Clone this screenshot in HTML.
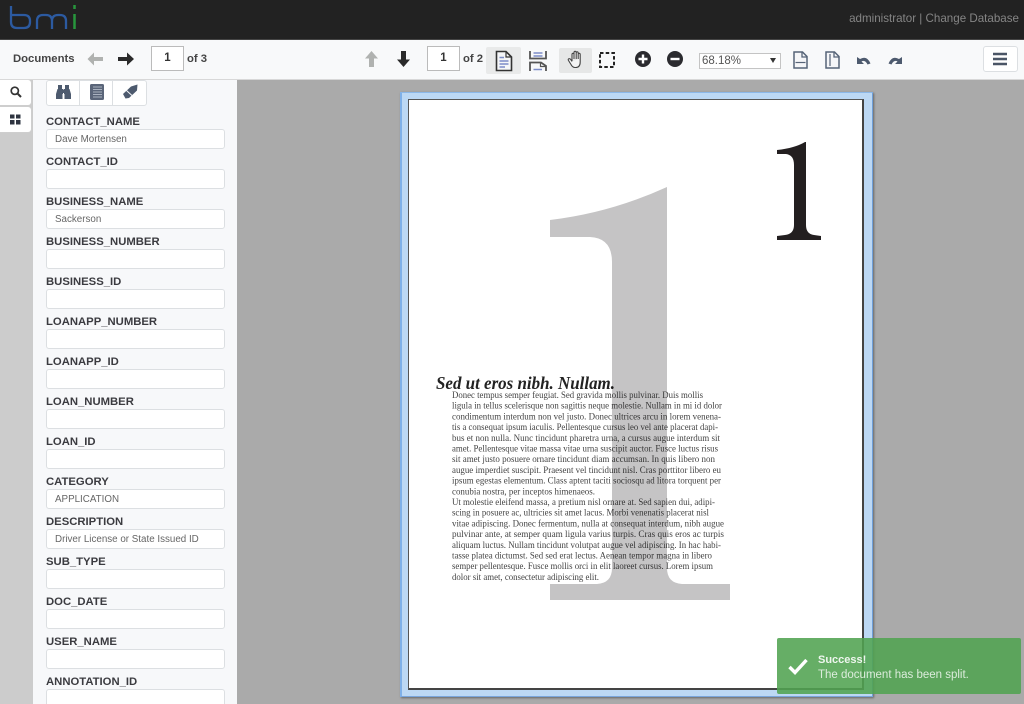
<!DOCTYPE html>
<html><head><meta charset="utf-8"><title>bmi</title>
<style>
html,body{margin:0;padding:0;background:#aaa;width:1024px;height:704px;overflow:hidden}
#wrap{position:relative;width:1024px;height:704px;overflow:hidden;font-family:"Liberation Sans",sans-serif;color:#333;filter:blur(.3px)}
.a{position:absolute}
#hd{left:0;top:0;width:1024px;height:39px;background:#222;border-bottom:1px solid #444}
#tb{left:0;top:40px;width:1024px;height:39px;background:#f8f9fa;border-bottom:1px solid #d8d8d8}
#strip{left:0;top:80px;width:33px;height:624px;background:#ccc}
#side{left:33px;top:80px;width:204px;height:624px;background:#f7f8fa}
.tab{left:0;width:31px;height:25px;background:#fff;border-radius:0 3px 3px 0;box-shadow:0 0 1px #ddd}
.lb{left:46px;margin-top:1px;font-size:11.3px;font-weight:bold;color:#3b3b40;line-height:14px;white-space:nowrap}
.in{left:46px;width:177px;height:18px;background:#fff;border:1px solid #dcdfe2;border-radius:3px;font-size:9.8px;color:#666;line-height:20px;text-indent:8px}
.num{width:31px;height:23px;background:#fff;border:1px solid #bbb;text-align:center;font-size:11.5px;font-weight:bold;line-height:23px;color:#333}
.t{font-size:11.3px;font-weight:bold;color:#444;white-space:nowrap}
svg{display:block}
</style></head><body><div id="wrap">
<div class="a" id="hd"></div>
<svg class="a" style="left:0;top:0" width="84" height="34" viewBox="0 0 84 34" fill="none" stroke-width="2.300"><path d="M11 6V22q0 6 6 6h7q6 0 6-6v-1q0-6-6-6H11" stroke="#2c5aa0"/><path d="M37 29V21q0-6 6-6h3q6 0 6 6v8M52 21q0-6 6-6h2q6 0 6 6v8" stroke="#2c5aa0"/><path d="M74.500 14V29M74.500 5V9" stroke="#27963c" stroke-width="2.500"/></svg>
<div class="a" style="right:5px;top:12px;font-size:11.6px;line-height:14px;color:#858585;white-space:nowrap">administrator | Change Database</div>

<div class="a" id="tb"></div>
<div class="a t" style="left:13px;top:53px;line-height:13px">Documents</div>
<svg class="a" style="left:86px;top:51px" width="18" height="16" viewBox="0 0 18 16"><path d="M8 1.500 1.500 8 8 14.500V10h9V6H8z" fill="#b0b2b0"/></svg>
<svg class="a" style="left:117px;top:51px" width="18" height="16" viewBox="0 0 18 16"><path d="M10 1.500 17 8l-7 6.500V10H1V6h9z" fill="#2a2a2a"/></svg>
<div class="a num" style="left:151px;top:46px">1</div>
<div class="a t" style="left:187px;top:53px;line-height:13px">of 3</div>

<svg class="a" style="left:364px;top:50px" width="15" height="18" viewBox="0 0 15 18"><path d="M7.500 1 14 8.500H10V17H5V8.500H1z" fill="#b0b2b0"/></svg>
<svg class="a" style="left:396px;top:50px" width="15" height="18" viewBox="0 0 15 18"><path d="M7.500 17 14 9.500H10V1H5V9.500H1z" fill="#2a2a2a"/></svg>
<div class="a num" style="left:427px;top:46px">1</div>
<div class="a t" style="left:463px;top:53px;line-height:13px">of 2</div>

<div class="a" style="left:486px;top:47px;width:35px;height:27px;background:#e9eaea;border-radius:2px"></div>
<svg class="a" style="left:495px;top:50px" width="18" height="22" viewBox="0 0 18 22"><path d="M1.500 1.500H11L16.500 7V20.500H1.500Z" fill="#f5f6f8" stroke="#333" stroke-width="1.600"/><path d="M11 1.500V7H16.500" fill="none" stroke="#333" stroke-width="1.200"/><path d="M4.500 7.500H9M4.500 11H13.500M4.500 14H13.500M4.500 17H10" stroke="#7c8cc8" stroke-width="1.400"/></svg>
<svg class="a" style="left:529px;top:50px" width="18" height="22" viewBox="0 0 18 22"><path d="M1 1V8.500H17V1M1 21V12.500H12L17 16V21" fill="none" stroke="#555" stroke-width="1.800"/><path d="M4.500 3H13.500M4.500 6H13.500M4.500 19.500H13" stroke="#7c8cc8" stroke-width="1.400"/><path d="M11.500 12.500V16.500H17" fill="none" stroke="#555" stroke-width="1.200"/></svg>

<div class="a" style="left:559px;top:48px;width:33px;height:25px;background:#e6e7e7;border-radius:2px"></div>
<svg class="a" style="left:567px;top:50px" width="17" height="19" viewBox="0 0 17 19"><path d="M5 11V4.500q0-1.200 1-1.200t1 1.200V9M7 9V2.500q0-1.200 1.100-1.200t1.100 1.200V9M9.200 9V3q0-1.200 1-1.200t1 1.200V9M11.200 9V4.500q0-1.200 1-1.200t1 1.200V12q0 5.500-4.500 5.500H8Q5.500 17.500 4 14.500L1.500 10.500q-.7-1.200.3-1.700t2 .8L5 11.500" fill="#f4f4f4" stroke="#444" stroke-width="1.100" stroke-linejoin="round"/></svg>
<svg class="a" style="left:599px;top:52px" width="16" height="16" viewBox="0 0 16 16"><rect x="1" y="1" width="14" height="14" fill="none" stroke="#222" stroke-width="2" stroke-dasharray="3.500 2.200"/></svg>
<svg class="a" style="left:635px;top:51px" width="16" height="16" viewBox="0 0 16 16"><circle cx="8" cy="8" r="8" fill="#2b2b2f"/><path d="M3.500 8h9M8 3.500v9" stroke="#fff" stroke-width="2.400"/></svg>
<svg class="a" style="left:667px;top:51px" width="16" height="16" viewBox="0 0 16 16"><circle cx="8" cy="8" r="8" fill="#2b2b2f"/><path d="M3.500 8h9" stroke="#fff" stroke-width="2.400"/></svg>
<div class="a" style="left:699px;top:53px;width:80px;height:14px;background:#fff;border:1px solid #c4c4c4;font-size:11.500px;line-height:14px;color:#555;text-indent:2px">68.18%</div>
<svg class="a" style="left:770px;top:58px" width="6" height="5" viewBox="0 0 6 5"><path d="M0 0H6L3 5Z" fill="#333"/></svg>
<svg class="a" style="left:793px;top:51px" width="15" height="18" viewBox="0 0 15 18"><path d="M1 1H9.500L14 5.500V17H1Z" fill="#f5f6f8" stroke="#566478" stroke-width="1.500"/><path d="M9 1V6H14" fill="none" stroke="#566478" stroke-width="1.300"/><path d="M2.500 11.500H12.500" stroke="#566478" stroke-width="1.200"/></svg>
<svg class="a" style="left:825px;top:51px" width="15" height="18" viewBox="0 0 15 18"><path d="M1 1H9.500L14 5.500V17H1Z" fill="#f5f6f8" stroke="#566478" stroke-width="1.500"/><path d="M9 1V6H14" fill="none" stroke="#566478" stroke-width="1.300"/><path d="M5 3V15" stroke="#566478" stroke-width="1.200"/></svg>
<svg class="a" style="left:856px;top:55px" width="15" height="10" viewBox="0 0 15 10"><path d="M1 2V9H8L5.500 6.500Q9 4.500 11.500 9.500L14.500 8.500Q11 0 4 4Z" fill="#4d5a6e"/></svg>
<svg class="a" style="left:888px;top:55px" width="15" height="10" viewBox="0 0 15 10"><path d="M14 2V9H7L9.500 6.500Q6 4.500 3.500 9.500L.5 8.500Q4 0 11 4Z" fill="#4d5a6e"/></svg>
<div class="a" style="left:983px;top:46px;width:33px;height:24px;background:#fff;border:1px solid #dcdfe2;border-radius:3px"></div>
<svg class="a" style="left:993px;top:52px" width="14" height="14" viewBox="0 0 14 14"><path d="M0 2H14M0 7H14M0 12H14" stroke="#4a5566" stroke-width="2.400"/></svg>

<div class="a" id="strip"></div>
<div class="a tab" style="top:80px"></div>
<div class="a tab" style="top:107px"></div>
<svg class="a" style="left:10px;top:86px" width="12" height="12" viewBox="0 0 12 12"><circle cx="4.800" cy="4.800" r="3.600" fill="none" stroke="#333" stroke-width="1.700"/><path d="M7.500 7.500 11 11" stroke="#333" stroke-width="2"/></svg>
<svg class="a" style="left:10px;top:114px" width="11" height="11" viewBox="0 0 11 11"><path d="M0 .5H4.500V4.500H0ZM6 .5H10.500V4.500H6ZM0 6H4.500V10.500H0ZM6 6H10.500V10.500H6Z" fill="#2e3440"/></svg>
<div class="a" id="side"></div>

<div class="a" style="left:46px;top:80px;width:99px;height:24px;background:#fff;border:1px solid #dcdfe2;border-radius:3px"></div>
<div class="a" style="left:79px;top:80px;width:1px;height:25px;background:#dcdfe2"></div>
<div class="a" style="left:112px;top:80px;width:1px;height:25px;background:#dcdfe2"></div>
<svg class="a" style="left:55px;top:84px" width="17" height="16" viewBox="0 0 17 16"><path d="M3 1H7V5H8V10H7.500V15H1V10L2.500 5H3ZM10 1H14V5H14.500L16 10V15H9.500V10H9V5H10ZM7.500 5.500H9.500V9H7.500Z" fill="#4d5a6e"/></svg>
<svg class="a" style="left:90px;top:84px" width="14" height="16" viewBox="0 0 14 16"><rect width="14" height="16" rx="1.500" fill="#5a6579"/><path d="M3 3H12M3 5.500H12M3 8H12M3 10.500H12M3 13H12" stroke="#aab2c0" stroke-width="1"/></svg>
<svg class="a" style="left:122px;top:84px" width="16" height="15" viewBox="0 0 16 15"><path d="M1 10 9 2.500 15.500 .5 15 6.500 7 14 3.500 14.500Z" fill="#4d5a6e"/><path d="M4.500 6.500 10.500 12" stroke="#f7f8fa" stroke-width="1"/></svg>

<div class="a lb" style="top:114px">CONTACT_NAME</div><div class="a in" style="top:129px">Dave Mortensen</div>
<div class="a lb" style="top:154px">CONTACT_ID</div><div class="a in" style="top:169px"></div>
<div class="a lb" style="top:194px">BUSINESS_NAME</div><div class="a in" style="top:209px">Sackerson</div>
<div class="a lb" style="top:234px">BUSINESS_NUMBER</div><div class="a in" style="top:249px"></div>
<div class="a lb" style="top:274px">BUSINESS_ID</div><div class="a in" style="top:289px"></div>
<div class="a lb" style="top:314px">LOANAPP_NUMBER</div><div class="a in" style="top:329px"></div>
<div class="a lb" style="top:354px">LOANAPP_ID</div><div class="a in" style="top:369px"></div>
<div class="a lb" style="top:394px">LOAN_NUMBER</div><div class="a in" style="top:409px"></div>
<div class="a lb" style="top:434px">LOAN_ID</div><div class="a in" style="top:449px"></div>
<div class="a lb" style="top:474px">CATEGORY</div><div class="a in" style="top:489px">APPLICATION</div>
<div class="a lb" style="top:514px">DESCRIPTION</div><div class="a in" style="top:529px">Driver License or State Issued ID</div>
<div class="a lb" style="top:554px">SUB_TYPE</div><div class="a in" style="top:569px"></div>
<div class="a lb" style="top:594px">DOC_DATE</div><div class="a in" style="top:609px"></div>
<div class="a lb" style="top:634px">USER_NAME</div><div class="a in" style="top:649px"></div>
<div class="a lb" style="top:674px">ANNOTATION_ID</div><div class="a in" style="top:689px"></div>

<div class="a" style="left:238px;top:80px;width:786px;height:624px;background:#aaa"></div>

<div class="a" style="left:400px;top:92px;width:473px;height:605px;background:#bcd8f4;border-left:2px solid #7fb0e8;border-top:1px solid #8cb8e8;border-right:1px solid #6f9fd8;border-bottom:1px solid #7aa6dc;box-sizing:border-box;box-shadow:1px 1px 2px #666"></div>
<div class="a" style="left:408px;top:99px;width:456px;height:591px;background:#fff;border:1px solid #555;border-right:2px solid #444;border-bottom:2px solid #444;box-sizing:border-box"></div>

<svg class="a" style="left:0;top:0" width="1024" height="704" viewBox="0 0 1024 704">
<path d="M667 187V568Q667 583 682 584H730V600H550V584H597Q612 583 612 568V262Q612 238 590 237H550V220Q610 213 667 187Z" fill="#c5c4c5"/>
<path d="M806 142V225Q806 234 814 235L821 236V240H777V236L785 235Q794 234 794 225V165Q794 155 786 154L777 154V150Q795 148 805 142Z" fill="#231f20"/>
<g style="filter:blur(.3px);mix-blend-mode:multiply" font-family="Liberation Serif,serif">
<text x="436" y="389" font-size="17.500" font-weight="bold" font-style="italic" fill="#222" textLength="179" lengthAdjust="spacingAndGlyphs">Sed ut eros nibh. Nullam.</text>
<g font-size="9.500" fill="#444">
<text x="452" y="398" textLength="251" lengthAdjust="spacingAndGlyphs">Donec tempus semper feugiat. Sed gravida mollis pulvinar. Duis mollis</text>
<text x="452" y="408.700" textLength="270" lengthAdjust="spacingAndGlyphs">ligula in tellus scelerisque non sagittis neque molestie. Nullam in mi id dolor</text>
<text x="452" y="419.400" textLength="269" lengthAdjust="spacingAndGlyphs">condimentum interdum non vel justo. Donec ultrices arcu in lorem venena-</text>
<text x="452" y="430.100" textLength="266" lengthAdjust="spacingAndGlyphs">tis a consequat ipsum iaculis. Pellentesque cursus leo vel ante placerat dapi-</text>
<text x="452" y="440.800" textLength="268" lengthAdjust="spacingAndGlyphs">bus et non nulla. Nunc tincidunt pharetra urna, a cursus augue interdum sit</text>
<text x="452" y="451.500" textLength="266" lengthAdjust="spacingAndGlyphs">amet. Pellentesque vitae massa vitae urna suscipit auctor. Fusce luctus risus</text>
<text x="452" y="462.200" textLength="263" lengthAdjust="spacingAndGlyphs">sit amet justo posuere ornare tincidunt diam accumsan. In quis libero non</text>
<text x="452" y="472.900" textLength="269" lengthAdjust="spacingAndGlyphs">augue imperdiet suscipit. Praesent vel tincidunt nisl. Cras porttitor libero eu</text>
<text x="452" y="483.600" textLength="269" lengthAdjust="spacingAndGlyphs">ipsum egestas elementum. Class aptent taciti sociosqu ad litora torquent per</text>
<text x="452" y="494.300" textLength="143" lengthAdjust="spacingAndGlyphs">conubia nostra, per inceptos himenaeos.</text>
<text x="452" y="505" textLength="263" lengthAdjust="spacingAndGlyphs">Ut molestie eleifend massa, a pretium nisl ornare at. Sed sapien dui, adipi-</text>
<text x="452" y="515.700" textLength="257" lengthAdjust="spacingAndGlyphs">scing in posuere ac, ultricies sit amet lacus. Morbi venenatis placerat nisl</text>
<text x="452" y="526.400" textLength="272" lengthAdjust="spacingAndGlyphs">vitae adipiscing. Donec fermentum, nulla at consequat interdum, nibh augue</text>
<text x="452" y="537.100" textLength="272" lengthAdjust="spacingAndGlyphs">pulvinar ante, at semper quam ligula varius turpis. Cras quis eros ac turpis</text>
<text x="452" y="547.800" textLength="269" lengthAdjust="spacingAndGlyphs">aliquam luctus. Nullam tincidunt volutpat augue vel adipiscing. In hac habi-</text>
<text x="452" y="558.500" textLength="260" lengthAdjust="spacingAndGlyphs">tasse platea dictumst. Sed sed erat lectus. Aenean tempor magna in libero</text>
<text x="452" y="569.200" textLength="261" lengthAdjust="spacingAndGlyphs">semper pellentesque. Fusce mollis orci in elit laoreet cursus. Lorem ipsum</text>
<text x="452" y="579.900" textLength="147" lengthAdjust="spacingAndGlyphs">dolor sit amet, consectetur adipiscing elit.</text>
</g></g>
</svg>

<div class="a" style="left:777px;top:638px;width:244px;height:56px;background:rgba(81,163,81,.88);border-radius:2px"></div>
<svg class="a" style="left:788px;top:658px" width="20" height="17" viewBox="0 0 20 17"><path d="M1.500 9 7 14.500 18.500 2" fill="none" stroke="#fff" stroke-width="3.400"/></svg>
<div class="a" style="left:818px;top:653px;font-size:11px;font-weight:bold;color:#eef6ee;line-height:14px;white-space:nowrap">Success!</div>
<div class="a" style="left:818px;top:668px;font-size:11.5px;color:#dcecdc;line-height:14px;white-space:nowrap">The document has been split.</div>
</div></body></html>
